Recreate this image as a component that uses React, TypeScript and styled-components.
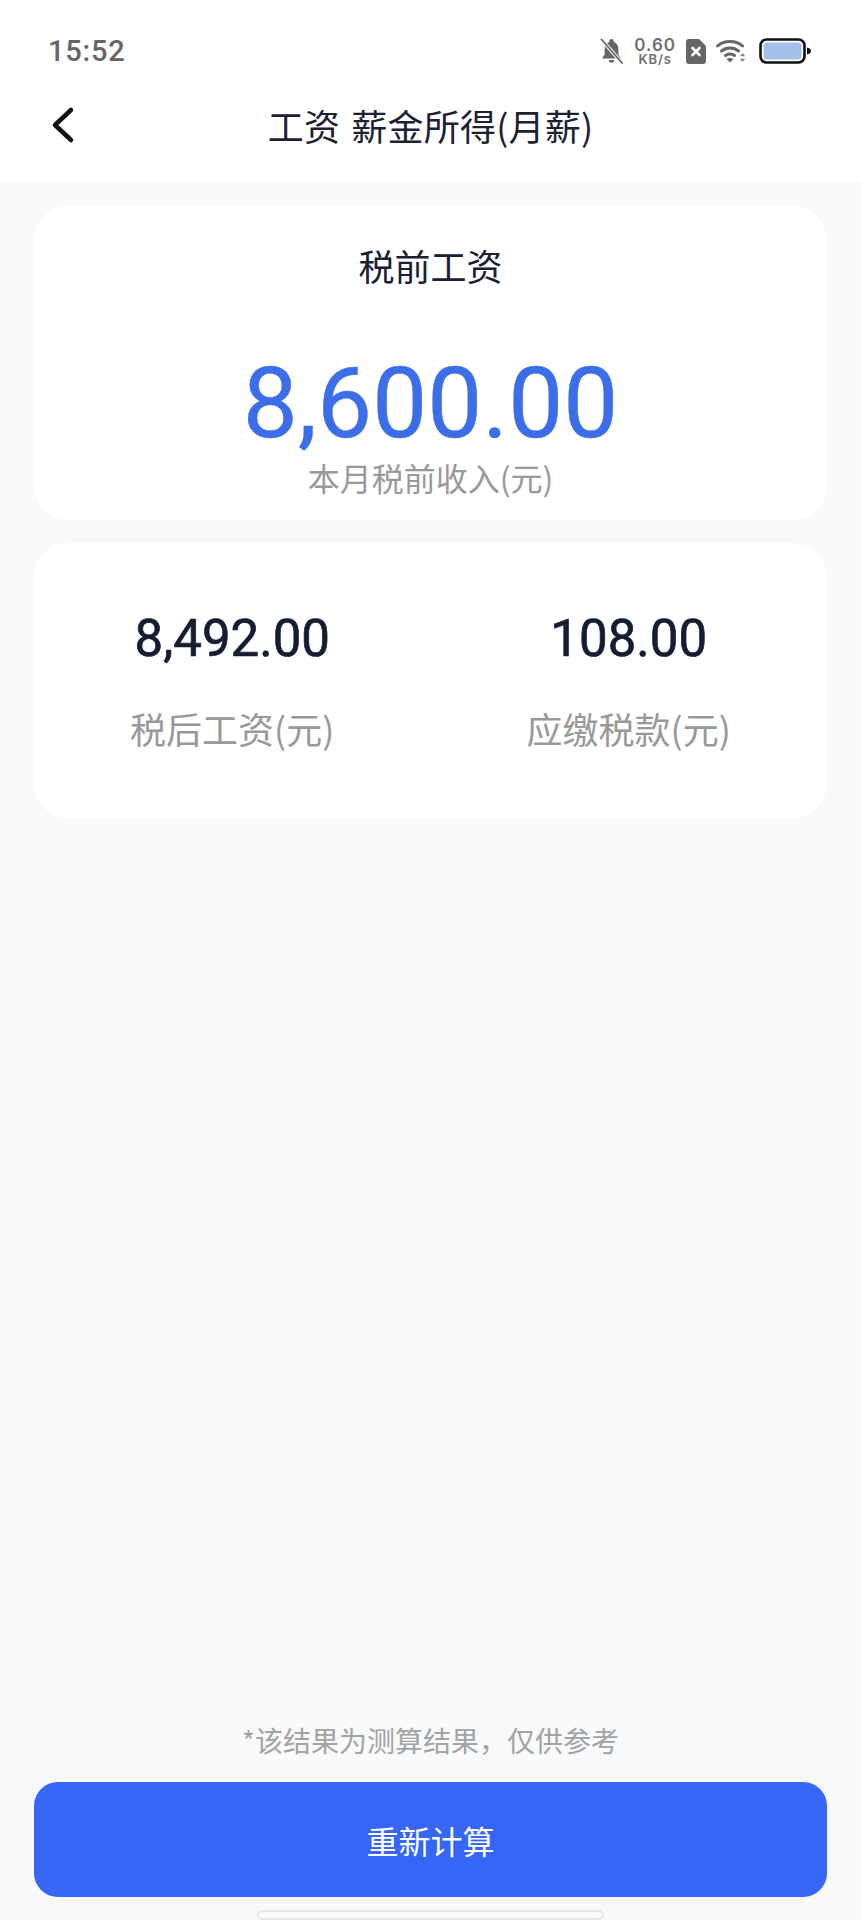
import React from "react";
import styled, { createGlobalStyle } from "styled-components";

const CJK = `"Noto Sans CJK SC", "Noto Sans", sans-serif`;
const NUM = `Roboto, "Noto Sans CJK SC", sans-serif`;

const Global = createGlobalStyle`
  html, body { margin: 0; padding: 0; background: #f8f9fa; }
  * { box-sizing: border-box; }
`;

const Page = styled.div`
  width: 861px;
  height: 1920px;
  display: flex;
  flex-direction: column;
  background: #f8f9fa;
  overflow: hidden;
  font-family: ${CJK};
`;

const Header = styled.header`
  height: 183px;
  background: #ffffff;
  display: flex;
  flex-direction: column;
`;

const StatusBar = styled.div`
  height: 84px;
  padding: 18px 50px 0 48px;
  display: flex;
  align-items: center;
  justify-content: space-between;
`;

const Time = styled.span`
  font: 500 29px/1 ${NUM};
  color: #666666;
  letter-spacing: 0.8px;
`;

const StatusIcons = styled.div`
  display: flex;
  align-items: center;
  gap: 10px;
`;

const Speed = styled.div`
  display: flex;
  flex-direction: column;
  align-items: center;
  font-family: "Inter", sans-serif;
  color: #707070;
  font-weight: 600;
`;

const SpeedValue = styled.span`
  font-size: 17px;
  line-height: 16px;
  letter-spacing: 1px;
`;

const SpeedUnit = styled.span`
  font-size: 13px;
  line-height: 13px;
  letter-spacing: 0.8px;
`;

const NavBar = styled.div`
  position: relative;
  flex: 1;
  display: flex;
  align-items: center;
  justify-content: center;
  padding-bottom: 16px;
`;

const BackIcon = styled.svg`
  position: absolute;
  left: 50px;
  top: 22px;
`;

const Title = styled.h1`
  margin: 0;
  font: 400 36px/1.2 ${CJK};
  color: #1d2233;
  letter-spacing: 0.2px;
  word-spacing: 3px;
`;

const Content = styled.main`
  flex: 1;
  display: flex;
  flex-direction: column;
  padding: 23px 34px 0;
`;

const Card = styled.section`
  background: #ffffff;
  border-radius: 34px;
`;

const TopCard = styled(Card)`
  height: 314px;
  display: flex;
  flex-direction: column;
  align-items: center;
  padding-top: 38px;
`;

const CardTitle = styled.h2`
  margin: 0;
  font: 400 36px/1.2 ${CJK};
  color: #1a2033;
`;

const BigAmount = styled.div`
  margin-top: 68px;
  font: 400 98px/1 ${NUM};
  color: #3b6ee8;
  -webkit-text-stroke: 0.4px #3b6ee8;
`;

const Caption = styled.div`
  margin-top: 4px;
  font: 400 32px/1.3 ${CJK};
  color: #999999;
`;

const StatsCard = styled(Card)`
  margin-top: 23px;
  height: 275px;
  display: grid;
  grid-template-columns: 1fr 1fr;
  padding: 65px 0 0 0;
`;

const Stat = styled.div`
  display: flex;
  flex-direction: column;
  align-items: center;
`;

const StatValue = styled.div`
  font: 400 51px/1.2 ${NUM};
  color: #171d30;
  -webkit-text-stroke: 0.7px #171d30;
`;

const StatLabel = styled.div`
  margin-top: 38px;
  font: 400 36px/1.2 ${CJK};
  color: #999999;
`;

const Spacer = styled.div`
  flex: 1;
`;

const Note = styled.div`
  text-align: center;
  font: 400 28px/1.3 ${CJK};
  color: #a3a3a3;
  margin-bottom: 24px;
`;

const PrimaryButton = styled.button`
  height: 115px;
  width: 100%;
  border: none;
  border-radius: 24px;
  background: #3566f5;
  color: #ffffff;
  font: 400 32px/1 ${CJK};
`;

const HomeZone = styled.div`
  height: 23px;
  display: flex;
  justify-content: center;
  align-items: flex-end;
`;

const HomeBar = styled.div`
  width: 347px;
  height: 10px;
  border: 2px solid #e6e6e8;
  border-radius: 5px;
  background: #fbfbfc;
`;

const BellOff = () => (
  <svg width="23" height="26" viewBox="0 0 23 26" fill="none" style={{ marginRight: 1 }}>
    <path d="M11.500 1c-1.300 0-2.200.9-2.200 2.100v1C6.300 5 4.600 7.700 4.600 11v5.500L2 20.500h19l-2.600-4V11c0-3.300-1.700-6-4.700-6.900v-1C13.700 1.900 12.800 1 11.500 1z" fill="#666" />
    <path d="M8.800 22h5.400a2.700 2.700 0 0 1-5.400 0z" fill="#666" />
    <path d="M1.500 1.500 22 25" stroke="#fff" strokeWidth="3.600" />
    <path d="M1.500 1.500 22 25" stroke="#666" strokeWidth="1.800" strokeLinecap="round" />
  </svg>
);

const SimX = () => (
  <svg width="20" height="25" viewBox="0 0 20 25">
    <path d="M3 0h10l7 7v15a3 3 0 0 1-3 3H3a3 3 0 0 1-3-3V3a3 3 0 0 1 3-3z" fill="#666" />
    <path d="M6.500 9l7 7M13.500 9l-7 7" stroke="#fff" strokeWidth="2.600" strokeLinecap="round" />
  </svg>
);

const Wifi = () => (
  <svg width="30" height="24" viewBox="0 0 30 24" fill="none">
    <path d="M1.500 7C8 1 20 1 26.500 7" stroke="#666" strokeWidth="3" strokeLinecap="round" />
    <path d="M5.500 12c4.600-4 12.400-4 17 0" stroke="#666" strokeWidth="3" strokeLinecap="round" />
    <path d="M9.500 16.500c2.400-2 6.600-2 9 0" stroke="#666" strokeWidth="3" strokeLinecap="round" />
    <path d="M14 23.500l-3.500-3.500c2-1.300 5-1.300 7 0z" fill="#666" />
    <path d="M26.500 14l-2.700 3.200h5.400zM26.500 23l-2.700-3.200h5.400z" fill="#888" />
  </svg>
);

const Battery = () => (
  <svg width="52" height="26" viewBox="0 0 52 26" style={{ marginLeft: 3 }}>
    <rect x="1.500" y="1.500" width="44" height="23" rx="6" fill="#fff" stroke="#111" strokeWidth="2.600" />
    <rect x="4.500" y="4.500" width="38" height="17" rx="3" fill="#a3c1e8" />
    <path d="M48 9.500c2.500.4 4 1.700 4 3.500s-1.500 3.100-4 3.500z" fill="#111" />
  </svg>
);

export default function App() {
  return (
    <Page>
      <Global />
      <Header>
        <StatusBar>
          <Time>15:52</Time>
          <StatusIcons>
            <BellOff />
            <Speed>
              <SpeedValue>0.60</SpeedValue>
              <SpeedUnit>KB/s</SpeedUnit>
            </Speed>
            <SimX />
            <Wifi />
            <Battery />
          </StatusIcons>
        </StatusBar>
        <NavBar>
          <BackIcon width="26" height="38" viewBox="0 0 26 38" fill="none">
            <path d="M21 4 5 19l16 15" stroke="#111" strokeWidth="4.500" strokeLinecap="round" strokeLinejoin="round" />
          </BackIcon>
          <Title>工资 薪金所得(月薪)</Title>
        </NavBar>
      </Header>
      <Content>
        <TopCard>
          <CardTitle>税前工资</CardTitle>
          <BigAmount>8,600.00</BigAmount>
          <Caption>本月税前收入(元)</Caption>
        </TopCard>
        <StatsCard>
          <Stat>
            <StatValue>8,492.00</StatValue>
            <StatLabel>税后工资(元)</StatLabel>
          </Stat>
          <Stat>
            <StatValue>108.00</StatValue>
            <StatLabel>应缴税款(元)</StatLabel>
          </Stat>
        </StatsCard>
        <Spacer />
        <Note>{"*该结果为测算结果\uFF0C仅供参考"}</Note>
        <PrimaryButton>重新计算</PrimaryButton>
        <HomeZone>
          <HomeBar />
        </HomeZone>
      </Content>
    </Page>
  );
}
